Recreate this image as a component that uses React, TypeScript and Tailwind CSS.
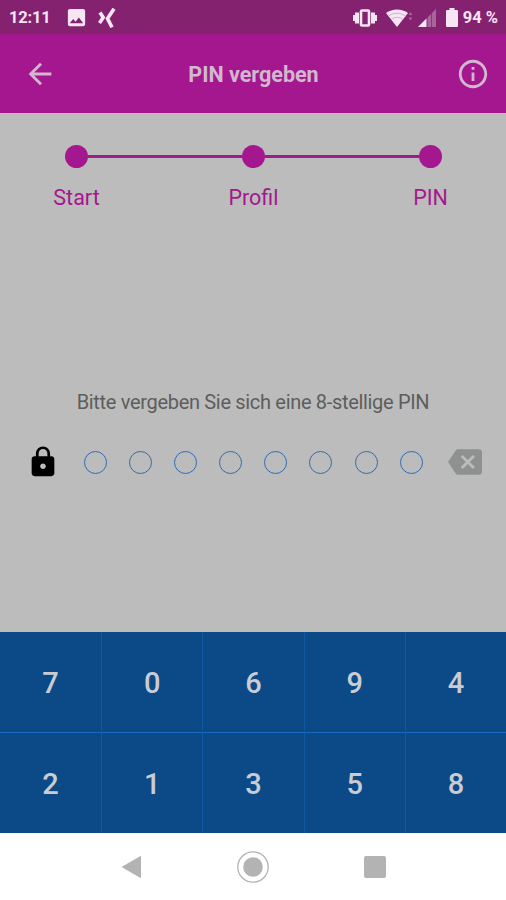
import { MdArrowBack, MdBackspace, MdImage, MdInfoOutline, MdLock } from 'react-icons/md'

const steps = ['Start', 'Profil', 'PIN']
const keys = [7, 0, 6, 9, 4, 2, 1, 3, 5, 8]
const PIN_LENGTH = 8

function StatusBar() {
  return (
    <div className="flex h-[34px] items-center bg-[#84226f] pl-[9px] pr-2 pt-px text-[16.5px] font-bold text-[#f6e6f3]">
      <span className="w-[56px] pt-px leading-none tracking-[-0.2px]">12:11</span>
      <MdImage className="size-[23px]" />
      <svg className="ml-[10px] h-5 w-[18px]" viewBox="0 0 18 20" fill="none" stroke="currentColor" strokeWidth="3.6">
        <path d="M2 4.5 5.2 9.5 1.5 15" />
        <path d="M16 .7 9.5 10.5 14 19.3" />
      </svg>
      <div className="flex-1" />
      <svg className="h-[18px] w-[24px]" viewBox="0 0 24 18" fill="none" stroke="currentColor">
        <path d="M1 6v6M23 6v6" strokeWidth="2" />
        <path d="M4 3.5v11M20 3.5v11" strokeWidth="4" />
        <rect x="8" y="1.5" width="8" height="15" rx="1" strokeWidth="2.6" />
      </svg>
      <svg className="ml-[9px] h-[18px] w-[27px]" viewBox="0 0 27 18">
        <path d="M0 4C6-.8 16-.8 22 4L11 18z" fill="currentColor" />
        <path d="M2.5 7.2C7.5 3.2 14.5 3.2 19.5 7.2M5.2 10.4c3.5-2.7 8.1-2.7 11.6 0" fill="none" stroke="#c79fbf" strokeWidth=".8" />
        <path d="M22.5 6 24.5 3l2 3zM22.5 8.5l2 3 2-3z" fill="#a9659b" />
      </svg>
      <svg className="ml-[5px] h-[18px] w-[18px]" viewBox="0 0 18 18">
        <path d="M18 0v18H0z" fill="#a9659b" />
        <path d="M8.5 9.5V18H0z" fill="currentColor" />
        <path d="M9.2 8v10M13.5 4v14" stroke="#84226f" strokeWidth=".7" />
      </svg>
      <svg className="ml-[10px] h-[19px] w-3" viewBox="0 0 12 19" fill="currentColor">
        <path d="M3.5 0h5v2H11a1 1 0 0 1 1 1v15a1 1 0 0 1-1 1H1a1 1 0 0 1-1-1V3a1 1 0 0 1 1-1h2.5z" />
      </svg>
      <span className="ml-[5px] whitespace-nowrap pt-px text-[16.5px] leading-none">94 %</span>
    </div>
  )
}

function Stepper() {
  return (
    <div className="pt-8 text-[#a5178f]">
      <div className="flex items-center pl-[65px] pr-16">
        <div className="size-[23px] rounded-full bg-[#a5178f]" />
        <div className="h-[3px] flex-1 bg-[#9a1d88]" />
        <div className="size-[23px] rounded-full bg-[#a5178f]" />
        <div className="h-[3px] flex-1 bg-[#9a1d88]" />
        <div className="size-[23px] rounded-full bg-[#a5178f]" />
      </div>
      <div className="flex justify-between pl-[26px] pr-[25px] pt-[18px] text-[21.5px] leading-6">
        {steps.map((step) => (
          <span key={step} className="w-[101px] text-center">{step}</span>
        ))}
      </div>
    </div>
  )
}

export default function App() {
  return (
    <div className="flex h-[900px] w-[506px] flex-col overflow-hidden bg-white font-['Roboto',sans-serif]">
      <StatusBar />
      <header className="flex h-[79px] items-center justify-between bg-[#a5178f] pl-[23px] pr-4 text-[#d2b8cf]">
        <button aria-label="Zurück"><MdArrowBack className="size-[34px]" /></button>
        <h1 className="pr-[6px] pt-[3px] text-[21.5px] font-bold">PIN vergeben</h1>
        <button aria-label="Info"><MdInfoOutline className="size-[34px]" /></button>
      </header>

      <main className="flex h-[519px] flex-col bg-[#bcbcbc]">
        <Stepper />
        <p className="mt-[180px] text-center text-[20px] leading-6 tracking-[-0.32px] text-[#5c5e5e]">
          Bitte vergeben Sie sich eine 8-stellige PIN
        </p>
        <div className="mt-[31px] flex items-center pl-[26px] pr-6">
          <MdLock className="size-[34px] text-black" />
          <div className="ml-[24px] flex gap-[22.1px]">
            {Array.from({ length: PIN_LENGTH }, (_, i) => (
              <div key={i} className="size-[23px] rounded-full border-[1.5px] border-[#2f6bb5]" />
            ))}
          </div>
          <button aria-label="Löschen" className="ml-auto">
            <MdBackspace className="size-[34px] text-[#8f9191]" />
          </button>
        </div>
      </main>

      <div className="grid h-[201px] grid-cols-5 grid-rows-[100px_101px] bg-[#0b4a87] text-[29px] font-medium text-[#c9ccd2]">
        {keys.map((key, i) => (
          <button
            key={key}
            className={`flex items-center justify-center border-[#0f59a3] pt-[3px] ${i % 5 > 0 ? 'border-l' : ''} ${i > 4 ? 'border-t border-t-[#166bc2]' : ''}`}
          >
            {key}
          </button>
        ))}
      </div>

      <nav className="flex h-[67px] items-center justify-between pl-[121px] pr-[120px] text-[#b3b3b3]">
        <svg className="h-6 w-5" viewBox="0 0 20 24" fill="currentColor">
          <path d="M.5 12 20 .8v22.4z" />
        </svg>
        <svg className="ml-px size-8" viewBox="0 0 32 32">
          <circle cx="16" cy="16" r="15.2" fill="none" stroke="currentColor" strokeWidth="1.3" />
          <circle cx="16" cy="16" r="9.8" fill="currentColor" />
        </svg>
        <div className="size-[22px] rounded-[2px] bg-[#b3b3b3]" />
      </nav>
    </div>
  )
}
